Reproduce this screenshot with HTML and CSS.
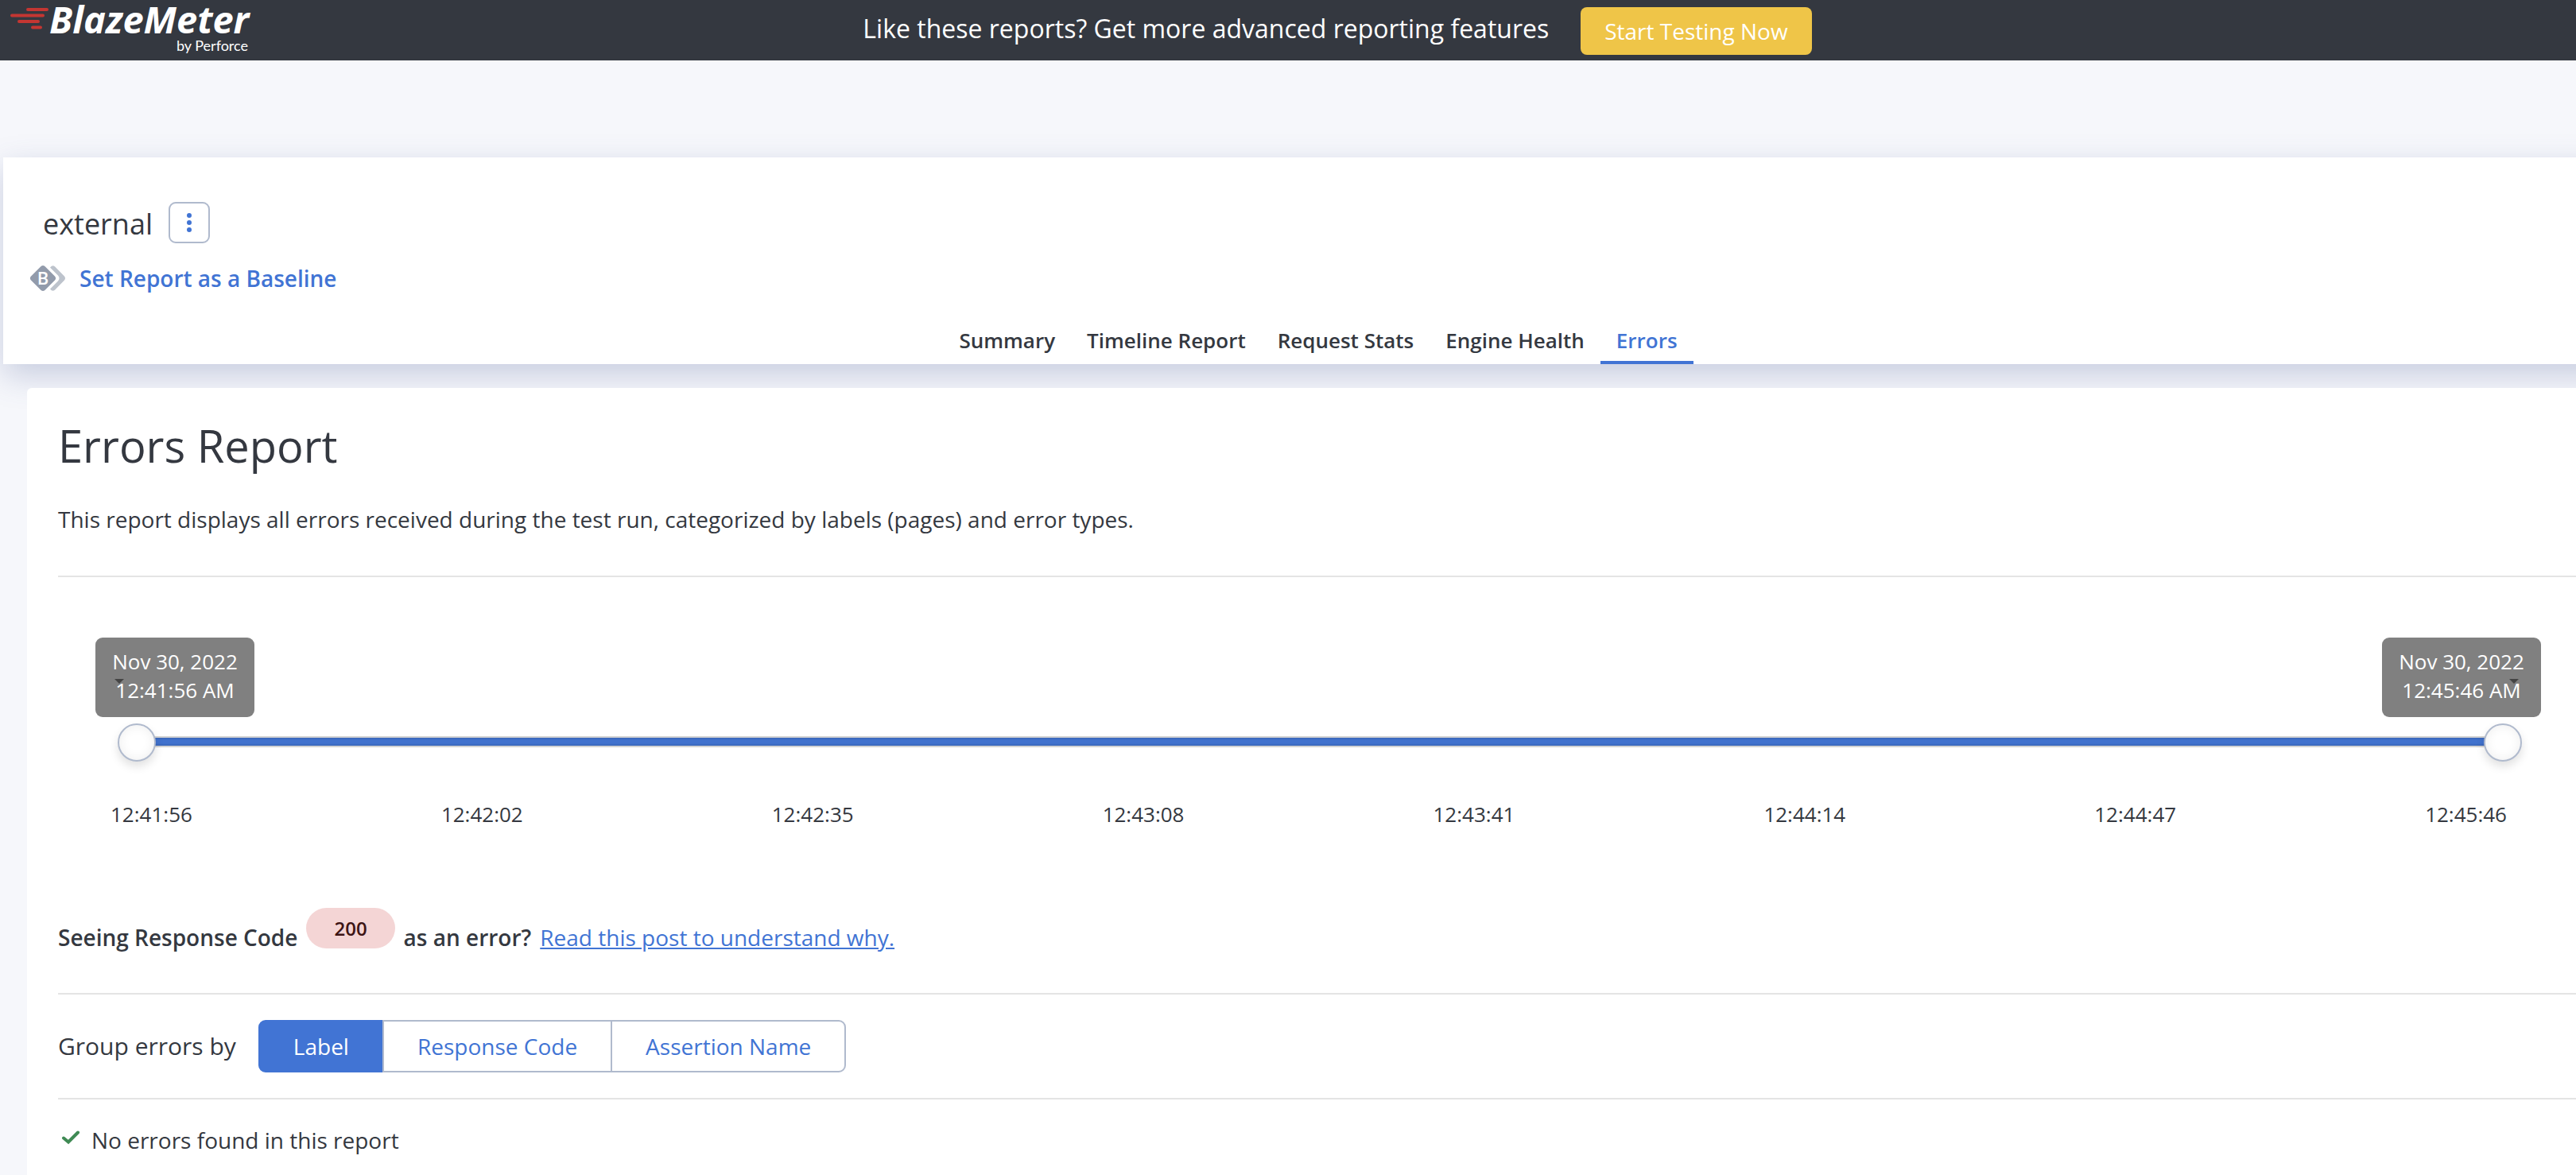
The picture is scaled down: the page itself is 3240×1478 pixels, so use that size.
FILE: index.html
```html
<!DOCTYPE html>
<html lang="en">
<head>
<meta charset="utf-8">
<meta name="viewport" content="width=device-width, initial-scale=1">
<title>external - Errors Report</title>
<link rel="stylesheet" href="styles.css">
</head>
<body>
<header class="topbar">
  <a class="logo" href="#">
    <svg class="logo-lines" width="50" height="30" viewBox="0 0 50 30" aria-hidden="true">
      <g fill="none" stroke="#c43632" stroke-width="4" stroke-linecap="round">
        <path d="M23 4H47M3 11.500H42M12 19H36M29 26.500H39"/>
      </g>
    </svg>
    <span class="logo-text">
      <span class="logo-name">BlazeMeter</span>
      <span class="logo-owner">by Perforce</span>
    </span>
  </a>
  <div class="promo">
    <span class="promo-text">Like these reports? Get more advanced reporting features</span>
    <button class="promo-button" type="button">Start Testing Now</button>
  </div>
</header>

<main>
  <section class="report-head">
    <div class="title-row">
      <h1 class="report-name">external</h1>
      <button class="menu-button" type="button" aria-label="Report actions">
        <svg width="8" height="26" viewBox="0 0 8 26" fill="#4174d4"><circle cx="4" cy="4" r="3"/><circle cx="4" cy="13" r="3"/><circle cx="4" cy="22" r="3"/></svg>
      </button>
    </div>
    <a class="baseline-link" href="#">
      <svg width="44" height="32" viewBox="0 0 44 32" aria-hidden="true">
        <path d="M13.500 1.100Q16 -1 18.500 1.100L31 13.500Q33.200 16 31 18.500L18.500 30.900Q16 33 13.500 30.900L1 18.500Q-1.200 16 1 13.500Z" fill="#929bab"/>
        <path d="M25 2.500Q28 -1.500 31 1.300L43 13.500Q45 16 43 18.500L31 30.700Q28 33.500 25 29.500L35 19.500Q38 16 35 12.500Z" fill="#bdc3cc"/>
        <text class="baseline-letter" x="16" y="24" text-anchor="middle">B</text>
      </svg>
      <span>Set Report as a Baseline</span>
    </a>
    <nav class="tabs" aria-label="Report sections">
      <a class="tab" href="#">Summary</a>
      <a class="tab" href="#">Timeline Report</a>
      <a class="tab" href="#">Request Stats</a>
      <a class="tab" href="#">Engine Health</a>
      <a class="tab tab-active" href="#" aria-current="page">Errors</a>
    </nav>
  </section>

  <section class="errors-card">
    <h2 class="card-title">Errors Report</h2>
    <p class="card-intro">This report displays all errors received during the test run, categorized by labels (pages) and error types.</p>

    <div class="timeline">
      <div class="tips">
        <output class="tip tip-start" for="range-start"><span>Nov 30, 2022</span><span>12:41:56 AM</span></output>
        <output class="tip tip-end" for="range-end"><span>Nov 30, 2022</span><span>12:45:46 AM</span></output>
      </div>
      <div class="slider">
        <div class="track"></div>
        <input class="range" id="range-start" type="range" min="0" max="230" value="0" aria-label="Start time">
        <input class="range" id="range-end" type="range" min="0" max="230" value="230" aria-label="End time">
      </div>
      <div class="ticks">
        <span>12:41:56</span><span>12:42:02</span><span>12:42:35</span><span>12:43:08</span><span>12:43:41</span><span>12:44:14</span><span>12:44:47</span><span>12:45:46</span>
      </div>
    </div>

    <p class="hint">
      <span>Seeing Response Code</span>
      <span class="code">200</span>
      <span>as an error?</span>
      <a class="hint-link" href="#">Read this post to understand why.</a>
    </p>

    <div class="grouping">
      <span class="grouping-label" id="group-label">Group errors by</span>
      <div class="segments" role="group" aria-labelledby="group-label">
        <button class="segment segment-active" type="button" aria-pressed="true">Label</button>
        <button class="segment" type="button" aria-pressed="false">Response Code</button>
        <button class="segment" type="button" aria-pressed="false">Assertion Name</button>
      </div>
    </div>

    <p class="result">
      <svg class="result-icon" width="24" height="18" viewBox="0 0 24 18" aria-hidden="true"><path d="M3 9.500L9 14.500L21 2.500" fill="none" stroke="#3f8a54" stroke-width="4" stroke-linecap="round"/></svg>
      <span>No errors found in this report</span>
    </p>
  </section>
</main>
</body>
</html>
```
FILE: styles.css
```css
:root {
  --ink: #343840;
  --blue: #4174d4;
  --edge: #b0bacd;
  --rule: #e4e4e4;
}

* {
  box-sizing: border-box;
}

body {
  margin: 0;
  min-height: 100vh;
  overflow-x: hidden;
  display: flex;
  flex-direction: column;
  background: #f6f7fb;
  color: var(--ink);
  font: 28px/40px "Open Sans", "Noto Sans", sans-serif;
}

h1, h2, p {
  margin: 0;
  font-weight: 400;
}

button {
  font: inherit;
  cursor: pointer;
}

a {
  color: var(--blue);
  text-decoration: none;
}

main {
  flex: 1;
  display: flex;
  flex-direction: column;
}

/* Top bar */
.topbar {
  display: flex;
  height: 76px;
  padding: 0 192px 0 12px;
  background: var(--ink);
  color: #fff;
}

.logo {
  display: flex;
  color: #fff;
}

.logo-lines {
  margin-top: 8px;
}

.logo-text {
  display: flex;
  flex-direction: column;
  width: 254px;
}

.logo-name {
  font-size: 47px;
  line-height: 48px;
  font-style: italic;
  font-weight: 700;
}

.logo-owner {
  padding-right: 4px;
  font-family: Lato, "Open Sans", sans-serif;
  font-size: 18px;
  line-height: 18px;
  text-align: right;
}

.promo {
  flex: 1;
  display: flex;
  justify-content: center;
  align-items: flex-start;
  gap: 40px;
  padding-top: 9px;
}

.promo-text {
  padding-top: 5px;
  font-size: 32px;
  line-height: 44px;
}

.promo-button {
  height: 60px;
  padding: 0 30px;
  border: 0;
  border-radius: 8px;
  background: #efc548;
  color: #fff;
}

/* Report heading */
.report-head {
  position: relative;
  display: flex;
  flex-direction: column;
  margin: 122px -72px 0 4px;
  padding: 56px 0 0 34px;
  background: #fff;
  box-shadow: 0 14px 38px rgba(74, 92, 150, 0.27);
}

.title-row {
  display: flex;
  align-items: center;
  gap: 20px;
  height: 52px;
  padding-left: 16px;
}

.report-name {
  padding-top: 4px;
  font-size: 36px;
  line-height: 48px;
}

.menu-button {
  display: grid;
  place-items: center;
  width: 52px;
  height: 52px;
  padding: 0;
  border: 2px solid var(--edge);
  border-radius: 9px;
  background: #fff;
}

.baseline-link {
  display: flex;
  align-self: flex-start;
  align-items: center;
  gap: 18px;
  margin-top: 24px;
  font-weight: 600;
}

.baseline-letter {
  fill: #fff;
  font: 600 22px "Open Sans", sans-serif;
}

.tabs {
  display: flex;
  justify-content: center;
  margin-top: 32px;
  margin-left: -34px;
}

.tab {
  height: 56px;
  padding: 8px 20px 0;
  border-bottom: 4px solid transparent;
  color: var(--ink);
  font-size: 26px;
  font-weight: 600;
  line-height: 36px;
}

.tab-active {
  border-color: var(--blue);
  color: var(--blue);
}

/* Errors card */
.errors-card {
  position: relative;
  flex: 1;
  margin: 30px 0 0 34px;
  padding: 34px 0 0 39px;
  border-top-left-radius: 6px;
  background: #fff;
}

.card-title {
  font-size: 56px;
  line-height: 76px;
}

.card-intro {
  padding: 35px 0 51px;
  border-bottom: 2px solid var(--rule);
}

.timeline {
  padding: 76px 44px 0 47px;
  font-size: 26px;
  line-height: 36px;
}

.tips {
  display: flex;
  justify-content: space-between;
}

.tip {
  position: relative;
  display: flex;
  flex-direction: column;
  align-items: center;
  width: 200px;
  height: 100px;
  padding: 12px 0;
  border-radius: 9px;
  background: #808080;
  color: #fff;
}

.tip span {
  position: relative;
  z-index: 1;
}

.tip::before {
  content: "";
  position: absolute;
  top: 52px;
  border: 6px solid transparent;
  border-top-color: #444;
  border-bottom: 0;
}

.tip-start::before {
  left: 24px;
}

.tip-end::before {
  right: 28px;
}

.slider {
  display: grid;
  align-items: center;
  height: 48px;
  margin: 8px 24px 0 28px;
}

.slider > * {
  grid-area: 1 / 1;
}

.track {
  height: 14px;
  margin: 0 20px 2px;
  border: solid #d3d3d3;
  border-width: 2px 0;
  background: linear-gradient(#3a66b8, #4172ce 35%, #4172ce 70%, #3a66b8);
}

.range {
  appearance: none;
  width: 100%;
  height: 48px;
  margin: 0;
  background: none;
  pointer-events: none;
}

.range::-webkit-slider-thumb {
  appearance: none;
  width: 48px;
  height: 48px;
  border: 2px solid var(--edge);
  border-radius: 50%;
  background: #fff;
  box-shadow: inset 0 0 14px rgba(0, 0, 0, 0.07), 0 6px 12px rgba(0, 0, 0, 0.12);
  pointer-events: auto;
}

.range::-moz-range-thumb {
  width: 44px;
  height: 44px;
  border: 2px solid var(--edge);
  border-radius: 50%;
  background: #fff;
  pointer-events: auto;
}

.ticks {
  display: flex;
  justify-content: space-between;
  padding: 48px 43px 0 19px;
}

.hint {
  display: flex;
  align-items: center;
  gap: 11px;
  padding: 100px 0 33px;
  border-bottom: 2px solid var(--rule);
  font-weight: 600;
}

.code {
  height: 51px;
  margin-bottom: 23px;
  padding: 0 35px;
  border-radius: 26px;
  background: #f4d5d5;
  color: #3d1414;
  font-size: 24px;
  line-height: 51px;
}

.hint-link {
  font-weight: 400;
  text-decoration: underline;
}

.grouping {
  display: flex;
  align-items: center;
  gap: 28px;
  padding: 32px 0;
  border-bottom: 2px solid var(--rule);
}

.grouping-label {
  font-size: 30px;
}

.segments {
  display: flex;
  height: 66px;
}

.segment {
  margin: 0 0 0 -2px;
  padding: 0 42px;
  border: 2px solid var(--edge);
  background: #fff;
  color: var(--blue);
}

.segment:first-child {
  margin: 0;
  border-radius: 9px 0 0 9px;
}

.segment:last-child {
  border-radius: 0 9px 9px 0;
}

.segment-active {
  border-color: var(--blue);
  background: var(--blue);
  color: #fff;
}

.result {
  display: flex;
  align-items: center;
  gap: 14px;
  padding: 31px 0 24px 4px;
}

.result-icon {
  margin-bottom: 6px;
}
```
